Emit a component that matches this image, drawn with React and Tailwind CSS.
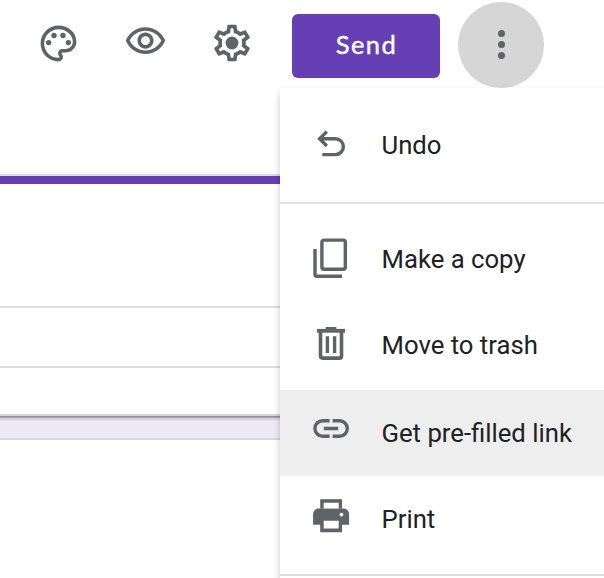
import React from "react";

const GRAY = "#5f6368";

function PaletteIcon() {
  return (
    <svg className="h-[43px] w-[43px] shrink-0" viewBox="0 0 24 24" fill={GRAY}>
      <path d="M12 22C6.49 22 2 17.51 2 12S6.49 2 12 2s10 4.04 10 9c0 3.31-2.69 6-6 6h-1.77c-.28 0-.5.22-.5.5 0 .12.05.23.13.33.41.47.64 1.06.64 1.67A2.5 2.5 0 0 1 12 22zm0-18c-4.41 0-8 3.59-8 8s3.59 8 8 8c.28 0 .5-.22.5-.5a.54.54 0 0 0-.14-.35c-.41-.46-.63-1.05-.63-1.65a2.5 2.5 0 0 1 2.5-2.5H16c2.21 0 4-1.79 4-4 0-3.86-3.59-7-8-7z" />
      <circle cx="6.5" cy="11.5" r="1.5" />
      <circle cx="9.5" cy="7.5" r="1.5" />
      <circle cx="14.5" cy="7.5" r="1.5" />
      <circle cx="17.5" cy="11.5" r="1.5" />
    </svg>
  );
}

function EyeIcon() {
  return (
    <svg className="h-[43px] w-[43px] shrink-0" viewBox="0 0 24 24" fill={GRAY}>
      <path d="M12 6c3.79 0 7.17 2.13 8.82 5.5C19.17 14.87 15.79 17 12 17s-7.17-2.13-8.82-5.5C4.83 8.13 8.21 6 12 6m0-2C7 4 2.73 7.11 1 11.5 2.73 15.89 7 19 12 19s9.27-3.11 11-7.5C21.27 7.11 17 4 12 4zm0 5c1.38 0 2.5 1.12 2.5 2.5S13.38 14 12 14s-2.5-1.12-2.5-2.5S10.62 9 12 9m0-2c-2.48 0-4.5 2.02-4.5 4.5S9.52 16 12 16s4.5-2.02 4.5-4.5S14.48 7 12 7z" />
    </svg>
  );
}

function GearIcon() {
  return (
    <svg className="h-11 w-11 shrink-0" viewBox="0 0 24 24" fill={GRAY}>
      <path d="M19.43 12.98c.04-.32.07-.64.07-.98 0-.34-.03-.66-.07-.98l2.11-1.65c.19-.15.24-.42.12-.64l-2-3.46c-.09-.16-.26-.25-.44-.25-.06 0-.12.01-.17.03l-2.49 1c-.52-.4-1.08-.73-1.69-.98l-.38-2.65C14.46 2.18 14.25 2 14 2h-4c-.25 0-.46.18-.49.42l-.38 2.65c-.61.25-1.17.59-1.69.98l-2.49-1c-.06-.02-.12-.03-.18-.03-.17 0-.34.09-.43.25l-2 3.46c-.13.22-.07.49.12.64l2.11 1.65c-.04.32-.07.65-.07.98 0 .33.03.66.07.98l-2.11 1.65c-.19.15-.24.42-.12.64l2 3.46c.09.16.26.25.44.25.06 0 .12-.01.17-.03l2.49-1c.52.4 1.08.73 1.69.98l.38 2.65c.03.24.24.42.49.42h4c.25 0 .46-.18.49-.42l.38-2.65c.61-.25 1.17-.59 1.69-.98l2.49 1c.06.02.12.03.18.03.17 0 .34-.09.43-.25l2-3.46c.12-.22.07-.49-.12-.64l-2.11-1.65zm-1.98-1.71c.04.31.05.52.05.73 0 .21-.02.43-.05.73l-.14 1.13.89.7 1.08.84-.7 1.21-1.27-.51-1.04-.42-.9.68c-.43.32-.84.56-1.25.73l-1.06.43-.16 1.13-.2 1.35h-1.4l-.19-1.35-.16-1.13-1.06-.43c-.43-.18-.83-.41-1.23-.71l-.91-.7-1.06.43-1.27.51-.7-1.21 1.08-.84.89-.7-.14-1.13c-.03-.31-.05-.54-.05-.74s.02-.43.05-.73l.14-1.13-.89-.7-1.08-.84.7-1.21 1.27.51 1.04.42.9-.68c.43-.32.84-.56 1.25-.73l1.06-.43.16-1.13.2-1.35h1.39l.19 1.35.16 1.13 1.06.43c.43.18.83.41 1.23.71l.91.7 1.06-.43 1.27-.51.7 1.21-1.07.85-.89.7.14 1.13z" />
      <circle cx="12" cy="12" r="3.5" />
    </svg>
  );
}

function MenuIcon({ children }) {
  return (
    <svg className="mb-2 h-11 w-11 shrink-0" viewBox="0 0 44 44" fill="none" stroke={GRAY} strokeWidth="3.4">
      {children}
    </svg>
  );
}

const undoIcon = (
  <MenuIcon>
    <path d="M17.8 10.6 10.6 17.8 17.8 25M11 17.8H26.5a7.9 7.9 0 0 1 0 15.8H13.3" />
  </MenuIcon>
);

const copyIcon = (
  <MenuIcon>
    <rect x="12.9" y="5.1" width="23.4" height="29.2" rx="2" />
    <path d="M6 14V39.6a1.7 1.7 0 0 0 1.7 1.7H33" />
  </MenuIcon>
);

const trashIcon = (
  <MenuIcon>
    <path d="M8 9.8H36" strokeWidth="3.8" />
    <path d="M16.7 7.2H27.3" strokeWidth="2.4" />
    <path d="M11.5 10V35.2a1.9 1.9 0 0 0 1.9 1.9H30.6a1.9 1.9 0 0 0 1.9-1.9V10" strokeWidth="3.6" />
    <path d="M18.4 15.3V32M25.6 15.3V32" />
  </MenuIcon>
);

const linkIcon = (
  <MenuIcon>
    <path d="M20.6 13.8H13.6a7.7 7.7 0 0 0 0 15.4H20.6M23.6 13.8H30.6a7.7 7.7 0 0 1 0 15.4H23.6M14.8 21.5H29.2" />
  </MenuIcon>
);

const printIcon = (
  <MenuIcon>
    <g fill={GRAY} stroke="none">
      <path d="M11.2 6.2H33V15.6H11.2z" />
      <path d="M9.4 15.6H34.8a5.3 5.3 0 0 1 5.3 5.3V31.8H33V39.2H11.2V31.8H4.1V20.9a5.3 5.3 0 0 1 5.3-5.3z" />
      <g fill="#fff">
        <path d="M14.7 9.7H29.7V15.6H14.7zM14.7 27.8H29.7V35.6H14.7z" />
        <circle cx="32.4" cy="21.6" r="1.9" />
      </g>
    </g>
  </MenuIcon>
);

function MenuItem({ icon, label, active, low }) {
  return (
    <div className={`flex h-[86px] shrink-0 items-center pl-[29px] ${active ? "bg-[#eeeeee]" : ""}`}>
      {icon}
      <span className={`ml-[28.5px] whitespace-nowrap text-[25.7px] leading-8 text-[#202124] ${low ? "mt-0" : "-mt-1"}`}>
        {label}
      </span>
    </div>
  );
}

export default function App() {
  return (
    <div className="relative h-[578px] w-[604px] overflow-hidden bg-white font-['Roboto',sans-serif]">
      <div className="flex h-[174px] items-start">
        <div className="pl-[37px] pt-[21.5px]"><PaletteIcon /></div>
        <div className="pl-[43.5px] pt-[20px]"><EyeIcon /></div>
        <div className="pl-[43px] pt-[21px]"><GearIcon /></div>
        <button className="ml-[38.5px] mt-[14px] flex h-16 w-[148px] items-center justify-center rounded-md bg-[#673fb4] pb-1 pl-px font-['Lato',sans-serif] text-[25.5px] font-normal tracking-[1.4px] text-white [-webkit-text-stroke:0.4px_white]">
          Send
        </button>
        <button className="ml-[18px] mt-[2px] flex h-[86px] w-[86px] flex-col items-center justify-center gap-1 rounded-full bg-[#d6d6d6] pb-px">
          <span className="h-[7px] w-[7px] rounded-full bg-[#5f6368]" />
          <span className="h-[7px] w-[7px] rounded-full bg-[#5f6368]" />
          <span className="h-[7px] w-[7px] rounded-full bg-[#5f6368]" />
        </button>
      </div>

      <div className="h-[10px] border-t-2 border-[#dadce0] bg-[#673fb4]" />
      <div className="h-[124px] border-b-2 border-[#dddddd]" />
      <div className="h-[60px] border-b-2 border-[#dddddd]" />
      <div className="h-12 border-b-2 border-[#d5d5da]" />
      <div className="h-6 border-b-2 border-[#d8d8dc] bg-linear-to-b from-[#8f8d96] from-3% via-[#cfcbd9] via-[11%] to-[#ede9f7] to-[24%]" />

      <div className="absolute left-[280px] top-[88px] flex h-[520px] w-[340px] flex-col rounded bg-white pt-4 shadow-[0_4px_7px_rgba(0,0,0,0.22)]">
        <MenuItem icon={undoIcon} label="Undo" />
        <div className="mb-[14px] mt-3 h-[2px] shrink-0 bg-[#dfdfdf]" />
        <MenuItem icon={copyIcon} label="Make a copy" />
        <MenuItem icon={trashIcon} label="Move to trash" />
        <MenuItem icon={linkIcon} label="Get pre-filled link" active low />
        <MenuItem icon={printIcon} label="Print" low />
        <div className="mt-3 h-[2px] shrink-0 bg-[#dfdfdf]" />
      </div>
    </div>
  );
}
